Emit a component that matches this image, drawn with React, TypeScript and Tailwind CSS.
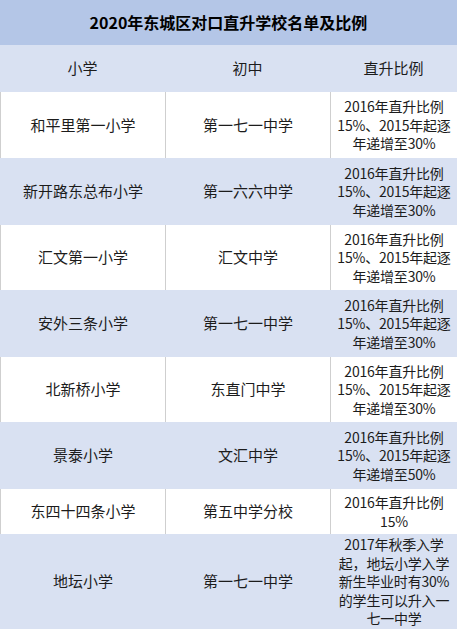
type Row = {
  primary: string;
  middle: string;
  ratio: string[];
  h: string;
};

const rows: Row[] = [
  { primary: "和平里第一小学", middle: "第一七一中学", ratio: ["2016年直升比例", "15%、2015年起逐", "年递增至30%"], h: "h-[66px]" },
  { primary: "新开路东总布小学", middle: "第一六六中学", ratio: ["2016年直升比例", "15%、2015年起逐", "年递增至30%"], h: "h-[67px]" },
  { primary: "汇文第一小学", middle: "汇文中学", ratio: ["2016年直升比例", "15%、2015年起逐", "年递增至30%"], h: "h-[65px]" },
  { primary: "安外三条小学", middle: "第一七一中学", ratio: ["2016年直升比例", "15%、2015年起逐", "年递增至30%"], h: "h-[67px]" },
  { primary: "北新桥小学", middle: "东直门中学", ratio: ["2016年直升比例", "15%、2015年起逐", "年递增至30%"], h: "h-[65px]" },
  { primary: "景泰小学", middle: "文汇中学", ratio: ["2016年直升比例", "15%、2015年起逐", "年递增至50%"], h: "h-[67px]" },
  { primary: "东四十四条小学", middle: "第五中学分校", ratio: ["2016年直升比例", "15%"], h: "h-[45px]" },
  {
    primary: "地坛小学",
    middle: "第一七一中学",
    ratio: ["2017年秋季入学", "起，地坛小学入学", "新生毕业时有30%", "的学生可以升入一", "七一中学"],
    h: "h-[95px]",
  },
];

export default function App() {
  return (
    <div
      className="w-[457px] text-[15px] leading-[18.5px] text-[#1c1c1c]"
      style={{ fontFamily: '"Noto Sans CJK SC", "Liberation Sans", sans-serif' }}
    >
      <div className="flex h-[45px] items-center justify-center bg-[#b4c6e7] text-[16px] font-bold text-black">
        2020年东城区对口直升学校名单及比例
      </div>
      <div className="grid h-[47px] grid-cols-[165px_165px_1fr] bg-[#d9e1f2]">
        <div className="flex items-center justify-center">小学</div>
        <div className="flex items-center justify-center">初中</div>
        <div className="flex items-center justify-center">直升比例</div>
      </div>
      {rows.map((r, i) => {
        const shaded = i % 2 === 1;
        const cell = shaded
          ? "flex items-center justify-center border-l border-[#d9e1f2] text-center"
          : "flex items-center justify-center border-l border-[#cfcfcf] text-center";
        return (
          <div
            key={i}
            className={`grid grid-cols-[165px_165px_1fr] ${r.h} ${shaded ? "bg-[#d9e1f2]" : "bg-white"}`}
          >
            <div className={cell}>{r.primary}</div>
            <div className={cell}>{r.middle}</div>
            <div className={cell}>
              <div className="whitespace-nowrap text-[14px] tracking-[-0.2px]">
                {r.ratio.map((line, j) => (
                  <div key={j}>{line}</div>
                ))}
              </div>
            </div>
          </div>
        );
      })}
    </div>
  );
}
